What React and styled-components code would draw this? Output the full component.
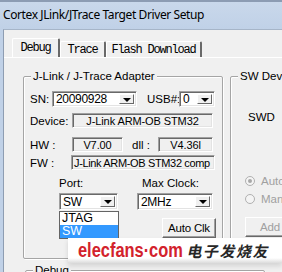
import React from 'react';
import styled, { createGlobalStyle } from 'styled-components';

const GlobalStyle = createGlobalStyle`
  html, body {
    margin: 0;
    padding: 0;
    background: #f0f0f0;
  }
  body {
    font-family: "Liberation Sans", Arial, sans-serif;
    font-size: 11px;
    color: #000;
  }
`;

const tabs = [
  { label: 'Debug', width: 48, selected: true },
  { label: 'Trace', width: 46 },
  { label: 'Flash Download', width: 96 },
];

const App = () => {
  return (
    <Window>
      <GlobalStyle />
      <TitleBar>Cortex JLink/JTrace Target Driver Setup</TitleBar>
      <Body>
        <LeftFrame />
        <Dialog>
          <TabBar>
            {tabs.map((tab) => (
              <Tab key={tab.label} width={tab.width} selected={tab.selected}>
                {tab.label}
              </Tab>
            ))}
          </TabBar>
          <TabPanel>
            <GroupRow>
              <Group width={200}>
                <GroupLabel>J-Link / J-Trace Adapter</GroupLabel>
                <Row mt={14} h={16}>
                  <Label width={22}>SN:</Label>
                  <Combo width={85} value="20090928" />
                  <Label width={32} ml={10}>USB#:</Label>
                  <Combo width={36} value="0" />
                </Row>
                <Row mt={6} h={15}>
                  <Label width={42}>Device:</Label>
                  <Field width={141}>J-Link ARM-OB STM32</Field>
                </Row>
                <Row mt={9} h={15}>
                  <Label width={42}>HW :</Label>
                  <Field width={51}>V7.00</Field>
                  <Label width={26} ml={9}>dll :</Label>
                  <Field width={55}>V4.36l</Field>
                </Row>
                <Row mt={3} h={15}>
                  <Label width={41}>FW :</Label>
                  <Field width={144} left>J-Link ARM-OB STM32 comp</Field>
                </Row>
                <Row mt={6} h={14} pl={35}>
                  <Label width={83}>Port:</Label>
                  <Label>Max Clock:</Label>
                </Row>
                <Row mt={3} h={17} pl={35}>
                  <ComboWrap>
                    <Combo width={59} value="SW" />
                    <DropList>
                      <DropItem>JTAG</DropItem>
                      <DropItem selected>SW</DropItem>
                    </DropList>
                  </ComboWrap>
                  <Spacer width={19} />
                  <Combo width={76} value="2MHz" />
                </Row>
                <Row mt={8} h={20} pl={138}>
                  <Button width={54}>Auto Clk</Button>
                </Row>
              </Group>
              <Group width={90}>
                <GroupLabel>SW Device</GroupLabel>
                <Row mt={33} h={14} pl={17}>
                  <Label>SWD</Label>
                </Row>
                <Row mt={50} h={14} pl={14}>
                  <Radio checked />
                  <DisabledText>Automatic Detection</DisabledText>
                </Row>
                <Row mt={4} h={14} pl={14}>
                  <Radio />
                  <DisabledText>Manual Configuration</DisabledText>
                </Row>
                <Row mt={11} h={20} pl={14}>
                  <Button width={50} disabled>Add</Button>
                </Row>
              </Group>
            </GroupRow>
            <Group width={240} bottom>
              <GroupLabel>Debug</GroupLabel>
            </Group>
          </TabPanel>
        </Dialog>
      </Body>
      <Watermark>
        <WatermarkLatin>elecfans·com</WatermarkLatin>
        <WatermarkCjk>电子发烧友</WatermarkCjk>
      </Watermark>
    </Window>
  );
};

const Combo = ({ width, value }) => (
  <ComboBox width={width}>
    <ComboText>{value}</ComboText>
    <ComboButton>
      <Arrow />
    </ComboButton>
  </ComboBox>
);

export default App;

const Window = styled.div`
  position: relative;
  width: 282px;
  height: 272px;
  overflow: hidden;
  display: flex;
  flex-direction: column;
`;

const TitleBar = styled.div`
  height: 27px;
  flex-shrink: 0;
  padding-left: 3px;
  border-top: 2px solid #8c9cb3;
  background: linear-gradient(#c9d8eb, #c0d1e7);
  font-family: "Noto Sans", "Open Sans", sans-serif;
  font-size: 12px;
  letter-spacing: -0.4px;
  line-height: 26px;
  color: #000;
  white-space: nowrap;
`;

const Body = styled.div`
  flex: 1;
  display: flex;
  min-height: 0;
`;

const LeftFrame = styled.div`
  width: 3px;
  flex-shrink: 0;
  background: #c0d1e7;
`;

const Dialog = styled.div`
  flex: 1;
  background: #f0f0f0;
  border-left: 1px solid #8e9db2;
  border-top: 1px solid #a6b5c8;
  overflow: hidden;
`;

const TabBar = styled.div`
  display: flex;
  align-items: flex-end;
  height: 19px;
  padding: 8px 0 0 8px;
`;

const Tab = styled.div`
  box-sizing: border-box;
  width: ${(p) => p.width}px;
  height: ${(p) => (p.selected ? 19 : 16)}px;
  display: flex;
  align-items: center;
  justify-content: center;
  border-top: 1px solid #fff;
  border-left: 1px solid #fff;
  border-right: 2px solid #696969;
  border-radius: 2px 2px 0 0;
  font-family: "Liberation Mono", "Courier New", monospace;
  font-size: 12px;
  letter-spacing: -1.2px;
  padding-top: ${(p) => (p.selected ? 0 : 1)}px;
  white-space: nowrap;
`;

const TabPanel = styled.div`
  border-top: 1px solid #fff;
  padding: 18px 0 0 19px;
`;

const GroupRow = styled.div`
  display: flex;
  gap: 7px;
`;

const Group = styled.div`
  position: relative;
  box-sizing: border-box;
  flex-shrink: 0;
  width: ${(p) => p.width}px;
  height: ${(p) => (p.bottom ? 40 : 183)}px;
  margin: ${(p) => (p.bottom ? '11px 0 0 2px' : '0')};
  border: 1px solid #a5a5a5;
  box-shadow: inset 1px 1px 0 #fff, 1px 1px 0 #fff;
  border-radius: 2px;
`;

const GroupLabel = styled.div`
  position: absolute;
  top: -7px;
  left: 7px;
  padding: 0 2px;
  background: #f0f0f0;
  font-size: 11.5px;
  line-height: 13px;
  white-space: nowrap;
`;

const Row = styled.div`
  display: flex;
  align-items: center;
  height: ${(p) => p.h}px;
  margin-top: ${(p) => p.mt}px;
  padding-left: ${(p) => (p.pl === undefined ? 6 : p.pl)}px;
`;

const Label = styled.div`
  flex-shrink: 0;
  width: ${(p) => (p.width ? `${p.width}px` : 'auto')};
  margin-left: ${(p) => p.ml || 0}px;
  font-size: 11.5px;
  white-space: nowrap;
`;

const Spacer = styled.div`
  flex-shrink: 0;
  width: ${(p) => p.width}px;
`;

const sunken = `
  box-sizing: border-box;
  border: 1px solid;
  border-color: #a0a0a0 #fff #fff #a0a0a0;
  box-shadow: inset 1px 1px 0 #696969, inset -1px -1px 0 #e3e3e3;
`;

const ComboBox = styled.div`
  ${sunken}
  flex-shrink: 0;
  position: relative;
  display: flex;
  align-items: center;
  width: ${(p) => p.width}px;
  height: 100%;
  background: #fff;
  padding: 2px;
`;

const ComboText = styled.div`
  flex: 1;
  padding-left: 1px;
  font-size: 12px;
  letter-spacing: -0.3px;
  white-space: nowrap;
  overflow: hidden;
`;

const ComboButton = styled.div`
  box-sizing: border-box;
  width: 15px;
  height: 100%;
  flex-shrink: 0;
  display: flex;
  align-items: center;
  justify-content: center;
  background: #f0f0f0;
  border: 1px solid;
  border-color: #fff #696969 #696969 #fff;
`;

const Arrow = styled.div`
  width: 0;
  height: 0;
  border-left: 4px solid transparent;
  border-right: 4px solid transparent;
  border-top: 4px solid #000;
  margin-top: 1px;
`;

const ComboWrap = styled.div`
  position: relative;
  height: 100%;
  flex-shrink: 0;
`;

const DropList = styled.div`
  position: absolute;
  top: calc(100% + 1px);
  left: 0;
  width: 60px;
  box-sizing: border-box;
  border: 1px solid #646464;
  background: #fff;
  z-index: 5;
`;

const DropItem = styled.div`
  height: 13px;
  line-height: 13px;
  padding-left: 2px;
  font-size: 12.5px;
  background: ${(p) => (p.selected ? '#3399ff' : '#fff')};
  color: ${(p) => (p.selected ? '#fff' : '#000')};
`;

const Field = styled.div`
  ${sunken}
  flex-shrink: 0;
  width: ${(p) => p.width}px;
  height: 100%;
  display: flex;
  align-items: center;
  justify-content: ${(p) => (p.left ? 'flex-start' : 'center')};
  padding-left: ${(p) => (p.left ? 2 : 0)}px;
  background: #f0f0f0;
  font-size: 11px;
  letter-spacing: ${(p) => (p.left ? -0.35 : -0.1)}px;
  white-space: nowrap;
  overflow: hidden;
`;

const Button = styled.div`
  box-sizing: border-box;
  flex-shrink: 0;
  width: ${(p) => p.width}px;
  height: 100%;
  display: flex;
  align-items: center;
  justify-content: center;
  background: #f0f0f0;
  border: 1px solid;
  border-color: #fff #696969 #696969 #fff;
  box-shadow: inset -1px -1px 0 #a0a0a0;
  color: ${(p) => (p.disabled ? '#a0a0a0' : '#000')};
  font-size: 11.5px;
  letter-spacing: -0.2px;
`;

const Radio = styled.div`
  box-sizing: border-box;
  width: 10px;
  height: 10px;
  flex-shrink: 0;
  margin-right: 6px;
  border-radius: 50%;
  border: 1px solid #b0b0b0;
  background: #f4f4f4;
  display: flex;
  align-items: center;
  justify-content: center;
  &::after {
    content: '';
    width: 4px;
    height: 4px;
    border-radius: 50%;
    background: ${(p) => (p.checked ? '#a8a8a8' : 'transparent')};
  }
`;

const DisabledText = styled.div`
  color: #a0a0a0;
  font-size: 11.5px;
  white-space: nowrap;
`;

const Watermark = styled.div`
  position: absolute;
  left: 68px;
  top: 238px;
  width: 214px;
  height: 25px;
  display: flex;
  align-items: center;
  padding-left: 10px;
  box-sizing: border-box;
  background: linear-gradient(to bottom, #fff 0%, #fff 80%, #dcdcdc 100%);
  box-shadow: 0 3px 5px rgba(0, 0, 0, 0.12);
  z-index: 10;
`;

const WatermarkLatin = styled.div`
  width: 108px;
  flex-shrink: 0;
  font-family: "Liberation Sans", Arial, sans-serif;
  font-weight: bold;
  font-size: 20px;
  color: #d3222c;
  transform: scaleX(0.82);
  transform-origin: left center;
  white-space: nowrap;
`;

const WatermarkCjk = styled.div`
  font-family: "Noto Sans CJK SC", sans-serif;
  font-weight: bold;
  font-size: 15px;
  letter-spacing: 1.5px;
  color: #262626;
  transform: skewX(-12deg);
  margin-left: 2px;
  white-space: nowrap;
`;
